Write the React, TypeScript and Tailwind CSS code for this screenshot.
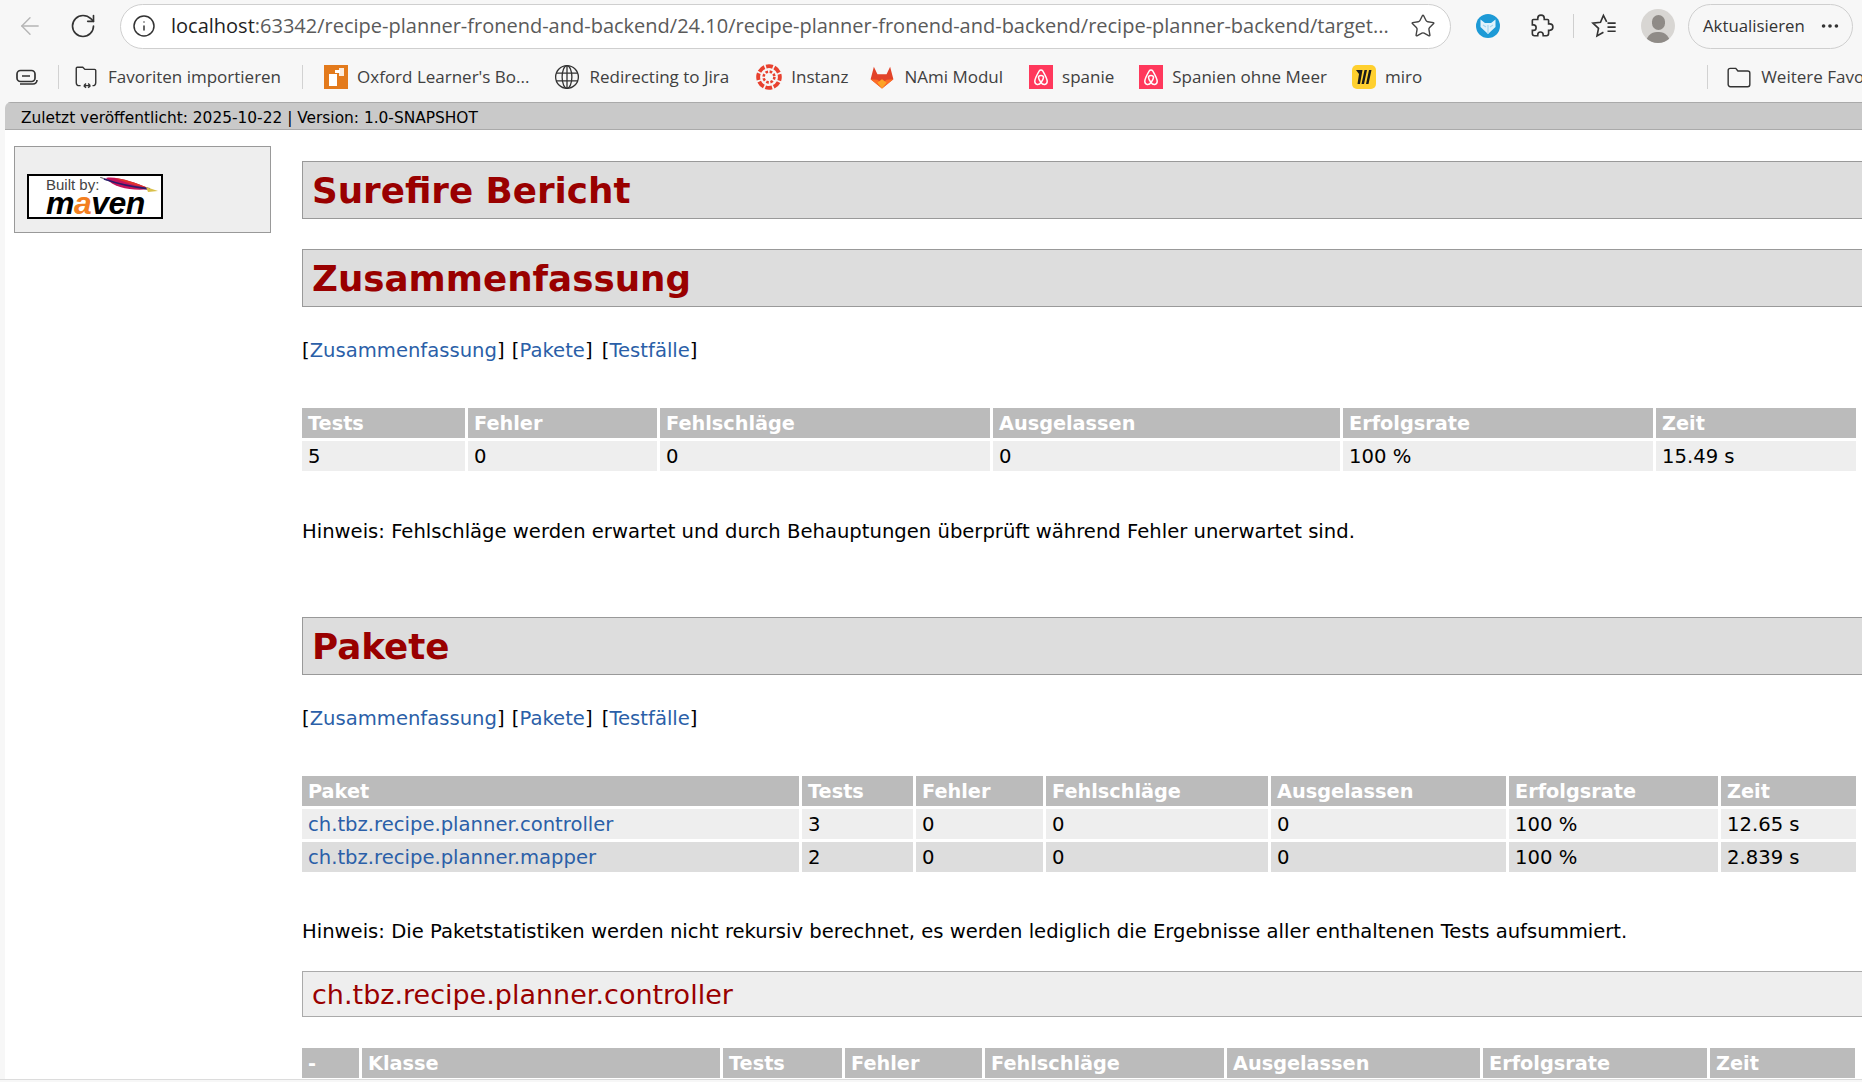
import { ArrowLeft, Ellipsis, Info, RotateCw, Star } from "lucide-react";

const pageFont = "font-['DejaVu_Sans',sans-serif]";

function Airbnb({ className = "" }: { className?: string }) {
  return (
    <svg viewBox="0 0 24 24" className={className}>
      <rect width="24" height="24" fill="#ff385c" />
      <path
        d="M12 17.5C10 20.500 6 20 5.800 16.500 5.700 14.500 9 8 10.300 5.800c.7-1.200 2.700-1.200 3.400 0C15 8 18.300 14.500 18.200 16.500 18 20 14 20.500 12 17.500Zm0 0c-1.500-2-2.500-3.500-2.500-5 0-2.700 5-2.700 5 0 0 1.500-1 3-2.500 5Z"
        fill="none"
        stroke="#fff"
        strokeWidth="1.500"
      />
    </svg>
  );
}

function Bookmark({ icon, label, className = "" }: { icon: React.ReactNode; label: string; className?: string }) {
  return (
    <div className={`flex shrink-0 items-center gap-[9px] whitespace-nowrap ${className}`}>
      {icon}
      <span>{label}</span>
    </div>
  );
}

function BrowserChrome() {
  return (
    <div className="h-[102px] shrink-0 bg-[#f7f7f7] font-['Open_Sans',sans-serif] text-[#333]">
      <div className="flex h-[52px] items-center">
        <ArrowLeft className="ml-[16px] size-[28px] shrink-0 text-[#b5b5b5]" strokeWidth={1.2} />
        <RotateCw className="ml-[25px] size-[28px] shrink-0 text-[#333]" strokeWidth={1.4} />
        <div className="ml-[23px] flex h-[45px] w-[1331px] shrink-0 items-center rounded-full border border-[#cfcfcf] bg-white pl-[11px] pr-[14px]">
          <Info className="size-[24px] shrink-0 text-[#333]" strokeWidth={1.5} />
          <div className="ml-[15px] flex-1 truncate text-[20px] text-[#5a5a5a]">
            <span className="text-[#1f1f1f]">localhost</span>:63342/recipe-planner-fronend-and-backend/24.10/recipe-planner-fronend-and-backend/recipe-planner-backend/target...
          </div>
          <Star className="ml-[8px] size-[26px] shrink-0 text-[#444]" strokeWidth={1.3} />
        </div>
        <svg viewBox="0 0 24 24" className="ml-[25px] size-[24px] shrink-0">
          <circle cx="12" cy="12" r="12" fill="#1d9ad6" />
          <path d="M4.500 5.500 9 9h6l4.500-3.500V13L12 20l-7.500-7Z" fill="#e0f2fb" />
          <path d="M12 20V11M7 11l3 2M17 11l-3 2" stroke="#a5d6ef" strokeWidth="1.200" fill="none" />
        </svg>
        <svg viewBox="0 0 24 24" className="ml-[28px] size-[26px] shrink-0" fill="none" stroke="#333" strokeWidth="1.500">
          <path d="M9 6V5a3 3 0 0 1 6 0v1h3a1 1 0 0 1 1 1v3h1a3 3 0 0 1 0 6h-1v3a2 2 0 0 1-2 2h-3v-1a2.500 2.500 0 0 0-5 0v1H6a2 2 0 0 1-2-2v-3h1a2.500 2.500 0 0 0 0-5H4V7a1 1 0 0 1 1-1Z" />
        </svg>
        <div className="ml-[19px] h-[24px] w-px shrink-0 bg-[#cfcfcf]" />
        <svg viewBox="0 0 24 24" className="ml-[16px] size-[28px] shrink-0" fill="none" stroke="#333" strokeWidth="1.400">
          <path d="M14.300 8.500 11.500 3 9 8.800 2.500 9.500 7.300 14 6 20.500l5.500-3.200M15 9.500h7M15 13h7M15 16.500h7" />
        </svg>
        <div className="ml-[23px] flex size-[34px] shrink-0 flex-col items-center justify-end overflow-hidden rounded-full bg-[#d8d6d3]">
          <div className="mb-[2px] h-[15px] w-[13px] rounded-full bg-[#8f8b87]" />
          <div className="h-[11px] w-[24px] rounded-t-full bg-[#8f8b87]" />
        </div>
        <div className="ml-[13px] flex h-[45px] w-[165px] shrink-0 items-center rounded-full border border-[#cfcfcf] pl-[14px] text-[16.800px]">
          Aktualisieren
          <Ellipsis className="ml-[14px] size-[22px]" strokeWidth={2} />
        </div>
      </div>
      <div className="flex h-[49px] items-center overflow-hidden whitespace-nowrap pl-[15px] text-[17px] text-[#404040]">
        <svg viewBox="0 0 24 24" className="size-[24px] shrink-0" fill="none" stroke="#333" strokeWidth="1.700">
          <rect x="2" y="5.500" width="18" height="11" rx="3.500" />
          <path d="M7 11h8M5 19h13a4 4 0 0 0 4-4" />
        </svg>
        <div className="ml-[19px] mr-[14px] h-[24px] w-px shrink-0 bg-[#d2d2d2]" />
        <Bookmark
          label="Favoriten importieren"
          icon={
            <svg viewBox="0 0 24 24" className="size-[26px]" fill="none" stroke="#333" strokeWidth="1.300">
              <path d="M3 17V4a1 1 0 0 1 1-1h5l2 2h9a1 1 0 0 1 1 1v11M3 17a3 3 0 0 0 3 3h1M21 17a3 3 0 0 1-3 3M10 20h6M10 20l2-2M10 20l2 2M16 20l-2-2M16 20l-2 2" />
            </svg>
          }
        />
        <div className="ml-[21px] mr-[21px] h-[24px] w-px shrink-0 bg-[#d2d2d2]" />
        <Bookmark
          label="Oxford Learner's Bo..."
          icon={
            <svg viewBox="0 0 24 24" className="size-[24px]">
              <rect width="24" height="24" fill="#e37a1c" />
              <rect x="5" y="9" width="8" height="12" fill="#fff" />
              <rect x="11" y="5" width="5" height="3" fill="#fff" />
              <rect x="15" y="3" width="5" height="8" fill="#fff" opacity=".85" />
            </svg>
          }
        />
        <Bookmark
          className="ml-[25px]"
          label="Redirecting to Jira"
          icon={
            <svg viewBox="0 0 24 24" className="size-[26px]" fill="none" stroke="#333" strokeWidth="1.200">
              <circle cx="12" cy="12" r="10.500" />
              <ellipse cx="12" cy="12" rx="4.500" ry="10.500" />
              <path d="M2 8.500h20M2 15.500h20M12 1.500v21" />
            </svg>
          }
        />
        <Bookmark
          className="ml-[27px]"
          label="Instanz"
          icon={
            <svg viewBox="0 0 24 24" className="size-[26px]" fill="none" stroke="#e8412f">
              <circle cx="12" cy="12" r="10" strokeWidth="3.600" strokeDasharray="6.300 1.550" strokeDashoffset="3" />
              <circle cx="12" cy="12" r="5" strokeWidth="2.400" strokeDasharray="2.400 1.530" />
            </svg>
          }
        />
        <Bookmark
          className="ml-[21px]"
          label="NAmi Modul"
          icon={
            <svg viewBox="0 0 24 24" className="size-[26px]">
              <path d="M12 22.500 1.500 14 4.500 2.500 7.800 9.500h8.400l3.300-7 3 11.500Z" fill="#e24329" />
              <path d="M1.500 14 12 22.500 22.500 14l-6.300.5L12 18l-4.200-3.500Z" fill="#fc6d26" />
              <path d="M12 22.500 7.800 17 12 14l4.200 3Z" fill="#fca326" />
            </svg>
          }
        />
        <Bookmark className="ml-[26px]" label="spanie" icon={<Airbnb className="size-[24px]" />} />
        <Bookmark className="ml-[25px]" label="Spanien ohne Meer" icon={<Airbnb className="size-[24px]" />} />
        <Bookmark
          className="ml-[25px]"
          label="miro"
          icon={
            <svg viewBox="0 0 24 24" className="size-[24px]">
              <rect width="24" height="24" rx="5" fill="#ffd02f" />
              <path d="M8 5h2.500L8 19H5.500L7 9 4 5ZM12.500 5H15l-3 14H9.500ZM17 5h2.500l-3 14H14Z" fill="#1a1a1a" />
            </svg>
          }
        />
        <div className="ml-[285px] mr-[18px] h-[24px] w-px shrink-0 bg-[#d2d2d2]" />
        <Bookmark
          label="Weitere Favoriten"
          icon={
            <svg viewBox="0 0 24 24" className="size-[26px]" fill="none" stroke="#333" strokeWidth="1.300">
              <path d="M2 6a2 2 0 0 1 2-2h5l2 2.500h9a2 2 0 0 1 2 2V19a2 2 0 0 1-2 2H4a2 2 0 0 1-2-2Z" />
            </svg>
          }
        />
      </div>
    </div>
  );
}

function MavenBadge() {
  return (
    <div className="relative h-[45px] w-[136px] border-2 border-black bg-white font-['Liberation_Sans',sans-serif]">
      <div className="absolute left-[17px] top-[1px] text-[15px] leading-none text-[#444]">Built by:</div>
      <svg viewBox="0 0 58 17" className="absolute left-[71px] top-[1px] h-[17px] w-[58px]">
        <path d="M0 0l7 3" stroke="#777" strokeWidth="1.200" />
        <path d="M6 1c10-2 28 4 44 11C35 14 14 12 6 1Z" fill="#c4145a" />
        <path d="M14 1c10 1 24 5 36 11C38 9 24 5 14 1Z" fill="#e0342c" />
        <path d="M4 2c14 5 28 8 46 10" fill="none" stroke="#2b1a6b" strokeWidth="1.800" />
        <path d="M46 10l12 4-10 1Z" fill="#d9c04a" />
      </svg>
      <div className="absolute left-[17px] top-[17px] text-[32px] leading-[20px] font-bold italic tracking-[-0.5px] text-black">
        m<span className="text-[#f37f20]">a</span>ven
      </div>
    </div>
  );
}

function Heading({ children }: { children: React.ReactNode }) {
  return (
    <h2 className="flex h-[58px] w-[1600px] items-center border border-[#999] bg-[#ddd] pl-[9px] pt-[2px] text-[35.700px] font-bold text-[#900]">
      {children}
    </h2>
  );
}

function Jump({ className }: { className: string }) {
  return (
    <p className={className}>
      [<a className="text-[#2b5fa8]">Zusammenfassung</a>] <span className="ml-[1px]">[</span>
      <a className="text-[#2b5fa8]">Pakete</a>] <span className="ml-[3px]">[</span>
      <a className="text-[#2b5fa8]">Testfälle</a>]
    </p>
  );
}

function Row({ cols, cells, header, bg, link }: { cols: string; cells: string[]; header?: boolean; bg?: string; link?: boolean }) {
  return (
    <div className={`grid gap-x-[3px] ${cols}`}>
      {cells.map((cell, i) => (
        <div
          key={i}
          className={
            header
              ? "flex h-[30px] items-center bg-[#bbb] pl-[6px] pt-[2px] text-[19.300px] font-bold whitespace-nowrap text-white"
              : `flex h-[30px] items-center pl-[6px] pt-[2px] whitespace-nowrap ${bg}`
          }
        >
          {link && i === 0 ? <a className="text-[#2b5fa8]">{cell}</a> : cell}
        </div>
      ))}
    </div>
  );
}

const summaryCols = "grid-cols-[163px_189px_330px_347px_310px_200px]";
const packageCols = "grid-cols-[497px_111px_127px_222px_235px_209px_135px]";
const classCols = "grid-cols-[57px_358px_119px_137px_239px_253px_224px_145px]";

export default function App() {
  return (
    <div className="flex h-[1082px] w-[1862px] flex-col overflow-hidden bg-[#f7f7f7]">
      <BrowserChrome />
      <div className={`ml-[5px] flex h-[977px] flex-col overflow-hidden rounded-tl-[6px] bg-white text-[19.600px] text-black ${pageFont}`}>
        <div className="flex h-[28px] shrink-0 items-center border-y border-[#aaa] bg-[#c9c9c9] pl-[16px] pt-[6px] text-[15.400px]">
          Zuletzt veröffentlicht: 2025-10-22 | Version: 1.0-SNAPSHOT
        </div>
        <div className="flex">
          <aside className="ml-[9px] mt-[16px] h-[87px] w-[257px] shrink-0 border border-[#999] bg-[#eee] pl-[12px] pt-[27px]">
            <MavenBadge />
          </aside>
          <main className="ml-[31px] w-[1554px] pt-[31px]">
            <Heading>Surefire Bericht</Heading>
            <div className="mt-[30px]">
              <Heading>Zusammenfassung</Heading>
            </div>
            <Jump className="mt-[29px] leading-[30px]" />
            <div className="mt-[42px]">
              <Row cols={summaryCols} header cells={["Tests", "Fehler", "Fehlschläge", "Ausgelassen", "Erfolgsrate", "Zeit"]} />
              <div className="mt-[3px]">
                <Row cols={summaryCols} bg="bg-[#eee]" cells={["5", "0", "0", "0", "100 %", "15.49 s"]} />
              </div>
            </div>
            <p className="mt-[46px] leading-[30px]">
              Hinweis: Fehlschläge werden erwartet und durch Behauptungen überprüft während Fehler unerwartet sind.
            </p>
            <div className="mt-[70px]">
              <Heading>Pakete</Heading>
            </div>
            <Jump className="mt-[29px] leading-[30px]" />
            <div className="mt-[42px]">
              <Row cols={packageCols} header cells={["Paket", "Tests", "Fehler", "Fehlschläge", "Ausgelassen", "Erfolgsrate", "Zeit"]} />
              <div className="mt-[3px] flex flex-col gap-y-[3px]">
                <Row cols={packageCols} link bg="bg-[#eee]" cells={["ch.tbz.recipe.planner.controller", "3", "0", "0", "0", "100 %", "12.65 s"]} />
                <Row cols={packageCols} link bg="bg-[#ddd]" cells={["ch.tbz.recipe.planner.mapper", "2", "0", "0", "0", "100 %", "2.839 s"]} />
              </div>
            </div>
            <p className="mt-[45px] leading-[30px]">
              Hinweis: Die Paketstatistiken werden nicht rekursiv berechnet, es werden lediglich die Ergebnisse aller enthaltenen Tests aufsummiert.
            </p>
            <h3 className="mt-[24px] flex h-[46px] w-[1600px] items-center border border-[#aaa] bg-[#eee] pl-[9px] pt-[3px] text-[27px] text-[#900]">
              ch.tbz.recipe.planner.controller
            </h3>
            <div className="mt-[31px]">
              <Row cols={classCols} header cells={["-", "Klasse", "Tests", "Fehler", "Fehlschläge", "Ausgelassen", "Erfolgsrate", "Zeit"]} />
            </div>
          </main>
        </div>
      </div>
      <div className="h-px bg-[#dcdcdc]" />
    </div>
  );
}
